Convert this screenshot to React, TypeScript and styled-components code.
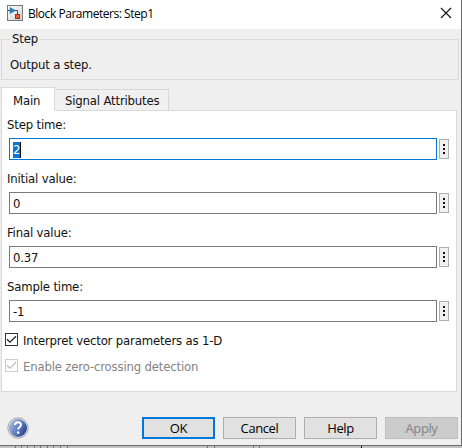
import React from "react";
import styled, { createGlobalStyle } from "styled-components";

const Global = createGlobalStyle`
  * { box-sizing: border-box; }
  body { margin: 0; background: #c8c8c8; overflow: hidden; }
`;

const ui = `"DejaVu Sans Condensed", "DejaVu Sans", sans-serif`;

const Screen = styled.div`
  width: 462px;
  height: 448px;
  display: flex;
  flex-direction: column;
  font: 13px/16px ${ui};
  font-stretch: condensed;
  letter-spacing: -0.17px;
  color: #111;
  white-space: nowrap;
`;
const Dialog = styled.div`
  height: 446px;
  display: flex;
  flex-direction: column;
  background: #efefef;
  border-right: 1px solid #6c6c6c;
  border-bottom: 1px solid #6c6c6c;
`;
const TitleBar = styled.header`
  height: 29px;
  flex: none;
  display: flex;
  align-items: center;
  padding: 0 9px 3px 7px;
  background: #fff;
`;
const Title = styled.span`
  flex: 1;
  margin: 2px 0 0 5px;
  font: 12px/16px "Open Sans", sans-serif;
  letter-spacing: -0.46px;
  color: #000;
`;
const Group = styled.fieldset`
  flex: none;
  width: 458px;
  height: 49px;
  margin: 2px 0 0 1px;
  padding: 0 0 0 8px;
  border: 1px solid #dadada;
`;
const Legend = styled.legend`
  height: 16px;
  padding: 0 2px;
`;
const Description = styled.div`
  margin-top: 10px;
`;
const Tabs = styled.div`
  flex: none;
  height: 24px;
  margin: 7px 0 -1px 1px;
  display: flex;
  align-items: flex-end;
`;
const Tab = styled.div<{ $active?: boolean; $w: number }>`
  position: relative;
  width: ${(p) => p.$w}px;
  height: ${(p) => (p.$active ? 24 : 22)}px;
  padding: ${(p) => (p.$active ? "5px 0 0 11px" : "3px 0 0 10px")};
  border: 1px solid #d9d9d9;
  border-left-width: ${(p) => (p.$active ? 1 : 0)}px;
  border-bottom-color: ${(p) => (p.$active ? "#fff" : "#d9d9d9")};
  background: ${(p) => (p.$active ? "#fff" : "#f0f0f0")};
`;
const Pane = styled.main`
  flex: none;
  width: 456px;
  height: 282px;
  margin-left: 1px;
  padding: 6px 0 0 3px;
  border: 1px solid #d9d9d9;
  background: #fff;
`;
const Field = styled.div`
  height: 54px;
`;
const Label = styled.div`
  height: 16px;
  margin-left: 2px;
`;
const InputRow = styled.div`
  display: flex;
  align-items: center;
  gap: 2px;
  margin: 5px 0 0 4px;
`;
const Input = styled.div<{ $focus?: boolean }>`
  width: 428px;
  height: 22px;
  display: flex;
  align-items: center;
  padding: 1px 0 0 3px;
  border: 1px solid ${(p) => (p.$focus ? "#0078d7" : "#7a7a7a")};
`;
const Selected = styled.span`
  height: 16px;
  width: 8px;
  background: #0078d7;
  color: #fff;
  border-right: 1px solid #000;
`;
const More = styled.div`
  width: 10px;
  height: 20px;
  display: flex;
  flex-direction: column;
  align-items: center;
  gap: 2px;
  padding-top: 4px;
  border: 1px solid #adadad;
  background: #f1f1f1;
`;
const Dot = styled.i`
  width: 2px;
  height: 2px;
  background: #111;
`;
const CheckRow = styled.div<{ $disabled?: boolean }>`
  height: 26px;
  display: flex;
  align-items: flex-start;
  gap: 5px;
  color: ${(p) => (p.$disabled ? "#838383" : "#111")};
`;
const Check = styled.div<{ $disabled?: boolean }>`
  width: 13px;
  height: 13px;
  border: 1px solid ${(p) => (p.$disabled ? "#cccccc" : "#333")};
  color: ${(p) => (p.$disabled ? "#bdbdbd" : "#222")};
  svg { display: block; }
`;
const Caption = styled.span`
  margin-top: 0;
`;
const Footer = styled.footer`
  flex: 1;
  display: flex;
  align-items: flex-start;
  gap: 8px;
  padding: 25px 3px 0 7px;
`;
const HelpIcon = styled.svg`
  flex: none;
  margin-right: 105px;
`;
const Button = styled.button<{ $kind?: "default" | "disabled" }>`
  flex: 0 0 73px;
  height: 22px;
  margin: 0;
  padding: 0;
  display: flex;
  align-items: center;
  justify-content: center;
  font: 13px/18px "Open Sans", sans-serif;
  letter-spacing: -0.4px;
  color: ${(p) => (p.$kind === "disabled" ? "#838383" : "#000")};
  background: ${(p) => (p.$kind === "disabled" ? "#cccccc" : "#e1e1e1")};
  border: ${(p) =>
    p.$kind === "default" ? "2px solid #0078d7" : p.$kind === "disabled" ? "1px solid #bfbfbf" : "1px solid #adadad"};
`;
const Backdrop = styled.div`
  height: 2px;
  display: flex;
  background: #c3c3c3;
`;
const Tick = styled.i<{ $gap: number; $dark?: boolean }>`
  width: 1px;
  margin-left: ${(p) => p.$gap}px;
  background: ${(p) => (p.$dark ? "#111" : "#707070")};
`;

const CheckBox = ({ disabled }: { disabled?: boolean }) => (
  <Check $disabled={disabled}>
    <svg width="11" height="11" viewBox="0 0 11 11">
      <path d="M1 5.2L4 8.2L10 2.2" fill="none" stroke="currentColor" strokeWidth="1.3" />
    </svg>
  </Check>
);

const fields = [
  { label: "Step time:", value: "2", focus: true },
  { label: "Initial value:", value: "0" },
  { label: "Final value:", value: "0.37" },
  { label: "Sample time:", value: "-1" },
];

const ticks = [15, 5, 5, 6, 5, 6, 5, 6, 6, 139, 6, 38, 5];

export default function App() {
  return (
    <Screen>
      <Global />
      <Dialog>
        <TitleBar>
          <svg width="16" height="16" viewBox="0 0 16 16">
            <defs>
              <linearGradient id="plate" x1="0" y1="0" x2="1" y2="1">
                <stop offset="0" stopColor="#fff" />
                <stop offset="1" stopColor="#d2d2d2" />
              </linearGradient>
            </defs>
            <rect x=".5" y=".5" width="15" height="15" fill="url(#plate)" stroke="#777" />
            <path d="M8 5.5H10.5V9" fill="none" stroke="#444" />
            <path d="M1 5.5H3" stroke="#444" />
            <path d="M3 2.5L8.5 5.5L3 8.5Z" fill="#2382be" stroke="#246894" strokeWidth=".5" />
            <rect x="8.5" y="9.5" width="4" height="4" fill="#e8633a" stroke="#9c3010" />
          </svg>
          <Title>Block Parameters: Step1</Title>
          <svg width="12" height="12" viewBox="0 0 12 12">
            <path d="M1 1L11 11M11 1L1 11" stroke="#111" strokeWidth="1.1" />
          </svg>
        </TitleBar>
        <Group>
          <Legend>Step</Legend>
          <Description>Output a step.</Description>
        </Group>
        <Tabs>
          <Tab $active $w={54}>Main</Tab>
          <Tab $w={114}>Signal Attributes</Tab>
        </Tabs>
        <Pane>
          {fields.map((f) => (
            <Field key={f.label}>
              <Label>{f.label}</Label>
              <InputRow>
                <Input $focus={f.focus}>{f.focus ? <Selected>{f.value}</Selected> : f.value}</Input>
                <More><Dot /><Dot /><Dot /></More>
              </InputRow>
            </Field>
          ))}
          <CheckRow>
            <CheckBox />
            <Caption>Interpret vector parameters as 1-D</Caption>
          </CheckRow>
          <CheckRow $disabled>
            <CheckBox disabled />
            <Caption>Enable zero-crossing detection</Caption>
          </CheckRow>
        </Pane>
        <Footer>
          <HelpIcon width="22" height="22" viewBox="0 0 22 22">
            <defs>
              <linearGradient id="ball" x1="0" y1=".2" x2="1" y2=".8">
                <stop offset="0" stopColor="#a9bce6" />
                <stop offset=".55" stopColor="#5a78bc" />
                <stop offset="1" stopColor="#1f3a86" />
              </linearGradient>
            </defs>
            <circle cx="11" cy="11" r="10.2" fill="#e6e6e6" stroke="#a5a5a5" />
            <circle cx="11" cy="11" r="9" fill="url(#ball)" />
            <path d="M8 8C8 4.3 14 4.3 14 7.8C14 10 11.2 10 11.2 12.6" fill="none" stroke="#fff" strokeWidth="2" />
            <circle cx="11.2" cy="15.6" r="1.3" fill="#fff" />
          </HelpIcon>
          <Button $kind="default">OK</Button>
          <Button>Cancel</Button>
          <Button>Help</Button>
          <Button $kind="disabled">Apply</Button>
        </Footer>
      </Dialog>
      <Backdrop>
        {ticks.map((gap, i) => (
          <Tick key={i} $gap={gap} />
        ))}
        <Tick $gap={101} $dark />
      </Backdrop>
    </Screen>
  );
}
